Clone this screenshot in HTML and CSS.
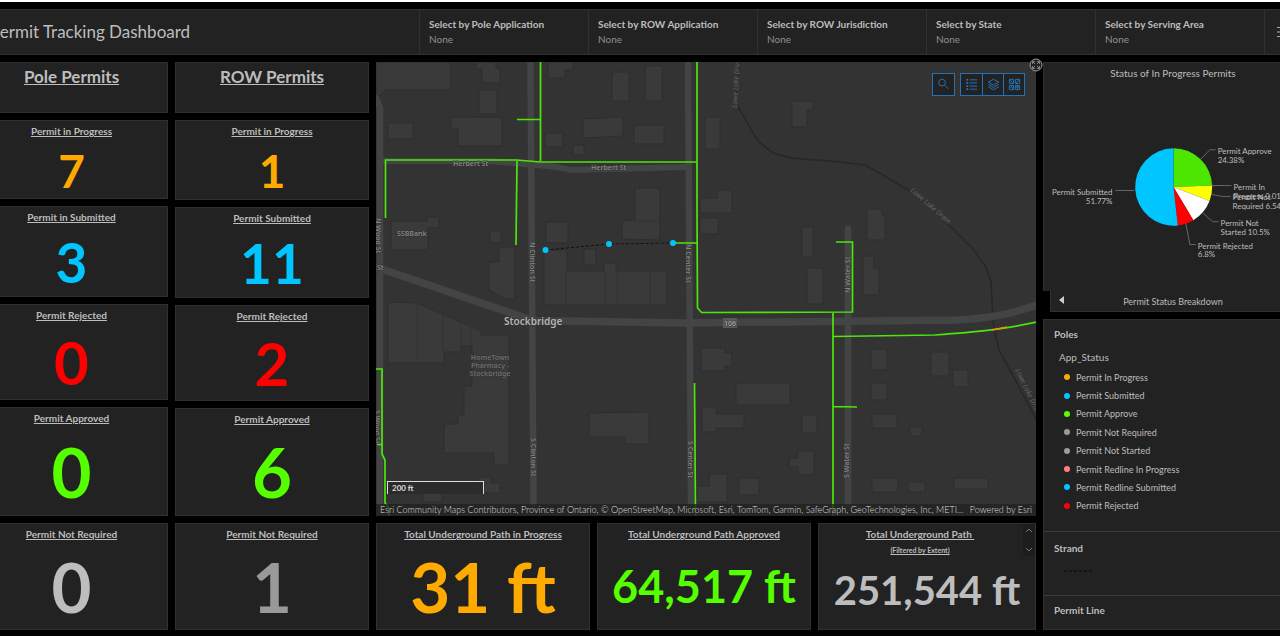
FILE: index.html
```html
<!DOCTYPE html>
<html lang="en">
<head>
<meta charset="utf-8">
<title>Permit Tracking Dashboard</title>
<link rel="stylesheet" href="styles.css">
</head>
<body>
<div class="dashboard">
  <header class="topbar">
    <h1 class="title">Permit Tracking Dashboard</h1>
    <div class="selector"><label for="s1">Select by Pole Application</label><select id="s1"><option>None</option></select></div>
    <div class="selector"><label for="s2">Select by ROW Application</label><select id="s2"><option>None</option></select></div>
    <div class="selector"><label for="s3">Select by ROW Jurisdiction</label><select id="s3"><option>None</option></select></div>
    <div class="selector"><label for="s4">Select by State</label><select id="s4"><option>None</option></select></div>
    <div class="selector"><label for="s5">Select by Serving Area</label><select id="s5"><option>None</option></select></div>
    <button class="menu" aria-label="Menu"><svg width="14" height="12" viewBox="0 0 14 12"><path d="M0 1.500h14M0 6h14M0 10.500h14" stroke="#aaa" fill="none"/></svg></button>
  </header>
  <main class="board">
    <section class="column pole">
      <div class="card"><h2>Pole Permits</h2></div>
      <div class="card"><h3>Permit in Progress</h3><p class="value v-xs orange">7</p></div>
      <div class="card"><h3>Permit in Submitted</h3><p class="value v-s blue">3</p></div>
      <div class="card"><h3>Permit Rejected</h3><p class="value v-m red">0</p></div>
      <div class="card"><h3>Permit Approved</h3><p class="value v-l green">0</p></div>
      <div class="card"><h3>Permit Not Required</h3><p class="value v-l light">0</p></div>
    </section>
    <section class="column row">
      <div class="card"><h2>ROW Permits</h2></div>
      <div class="card"><h3>Permit in Progress</h3><p class="value v-xs orange">1</p></div>
      <div class="card"><h3>Permit Submitted</h3><p class="value v-s blue">11</p></div>
      <div class="card"><h3>Permit Rejected</h3><p class="value v-m red">2</p></div>
      <div class="card"><h3>Permit Approved</h3><p class="value v-l green">6</p></div>
      <div class="card"><h3>Permit Not Required</h3><p class="value v-l gray">1</p></div>
    </section>
    <section class="center">
      <div class="map">
        <svg class="canvas" viewBox="376 62 660 454" preserveAspectRatio="xMidYMid slice">
          <g class="buildings">
            <path d="M376 62h75v28h-66l-9 10zM476 62h20v6h4v15h-18v-14h-6zM479 90h18v24h-18zM388 123h25v16h-25zM451 117h51v29h-44v-17h-7zM548 62h25v8h-8v8h-17zM612 72h17v29h-17zM645 66h17v35h-17zM583 119l40-2v19l-40 2zM634 125h30v19h-30zM545 133h18v14h-18zM573 145h11v10h-11zM705 117h15v32h-15zM792 101h21v9h-6v17h-15z"/>
            <path d="M391 221h36v-4h12v11h-11v22h-37zM490 231h11v12h-11zM499 247h16v52h-10l-16-9v-28h10zM546 222h22v21h-22zM635 188h25v52l-38-1v-19h13zM584 249h12v16h-12zM544 250h23v21h37v-8h12v8h51v34H544zM700 198h17v-8h15v23h-32zM700 218h18v16h-18zM802 227h11v30h-11zM867 209h15v6h3v25h-18zM863 256h11v12h5v27h-16zM807 268h16v36h-16z"/>
            <path d="M388 302l29 1 64 28v4h28v130h-15v-12h-50v-29h14v-9h6v-29h8v-40h-11v6h-17v11h-56zM589 413l60-1v32h-24v-7h-36zM701 348h24v5h7v13h-7v5h-24zM736 383h54v22h-54zM702 407h14v7h28v14h-28v4h-14zM802 415h15v18h-15zM798 451h16v24h-16v-8h-9v-9h9zM709 474h18v28h-30v-16h12zM739 478h20v17h-20zM871 349h16v21h-16zM871 383h16v17h-16zM931 352h18v24h-18zM953 370h15v17h-15zM872 414h25v14h-25zM910 427h12v9h-12zM872 478h26v14h-26zM908 482h17v10h-17zM954 478h34v11h-34zM423 493h19v9h-19zM480 477h11v6h9v10h-20z"/>
          </g>
          <path class="parcels" d="M417 303v60M443 314v38M461 322v24M471 326v20M566 272v33M605 272v33M617 272v33M650 272v33M622 221h37"/>
          <path class="drain" d="M740 62c-4 20-5 32-2 45l20 34 15 12 18 5 50 4 24 3 18 10 30 18 32 28 28 28 13 18 5 15 2 38 2 13 4 17 20 37 18 34"/>
          <g class="roads">
            <path d="M376 98l4 10v396M530.500 62l3 442M688 62l3 442M848 229V504" stroke-width="6.500"/>
            <path d="M380 161h110l46 4q25 2 35 5l115-3" stroke-width="6"/>
            <path d="M376 267l158 54h30l120 2 272-3c40-2 57-7 84-16" stroke-width="7.500"/>
          </g>
          <g class="lines">
            <path d="M385.500 218v-58h131l24 2H697M540.500 62v99M517 119.500h23M517 161l-1 84M697 62v147l.5 99 4 4.500 151-.5v-70H836M674 243h23M833 312v204M833 336.500l102-1.500c40-3 65-5 102-13M833 406.500l24 .5M694.500 383l1 133M376 369h6v85l3 6v43l4 5v8M377 444.500h6"/>
            <path class="pending" d="M992 330l15-3"/>
          </g>
          <path class="strand" d="M546 250l63-6 64-1"/>
          <g fill="#00c5ff"><circle cx="545.500" cy="250" r="3"/><circle cx="609" cy="244" r="3"/><circle cx="673" cy="243" r="3"/></g>
          <rect x="723" y="318" width="14" height="10" fill="#595b5a"/>
          <g class="labels">
            <text x="453" y="166">Herbert St</text><text x="591" y="170">Herbert St</text>
            <text x="397" y="236">SSBBank</text><text class="city" x="504" y="325">Stockbridge</text>
            <text x="724" y="326" fill="#aaa">106</text>
            <g class="poi"><text x="490" y="360">HomeTown</text><text x="490" y="368">Pharmacy -</text><text x="490" y="376">Stockbridge</text></g>
            <text transform="translate(530 242) rotate(90)">N Clinton St</text>
            <text transform="translate(531 438) rotate(90)">S Clinton St</text>
            <text transform="translate(686 244) rotate(90)">N Center St</text>
            <text transform="translate(688 441) rotate(90)">S Center St</text>
            <text transform="translate(376 218) rotate(90)">N Wood St</text>
            <text transform="translate(375 410) rotate(90)">S Wood St</text>
            <text transform="translate(850 293) rotate(-90)">N Water St</text>
            <text transform="translate(849 478) rotate(-90)">S Water St</text>
            <text x="377" y="270">St</text>
            <g class="water">
              <text transform="translate(737 108) rotate(-87)">Lowe Lake Drain</text>
              <text transform="translate(910 191) rotate(41)">Lowe Lake Drain</text>
              <text transform="translate(1015 370) rotate(64)">Lowe Lake Drain</text>
            </g>
          </g>
        </svg>
        <div class="tools">
          <button class="tool" aria-label="Search"><svg viewBox="0 0 16 16"><circle cx="6.500" cy="6" r="3.600"/><path d="M9.300 8.800l4 4"/></svg></button>
          <div class="toolgroup">
            <button class="tool" aria-label="Legend"><svg viewBox="0 0 16 16"><path d="M6 3h8M6 6.300h8M6 9.700h8M6 13h8"/><path d="M2.500 3h2M2.500 6.300h2M2.500 9.700h2M2.500 13h2" stroke-width="1.800"/></svg></button>
            <button class="tool" aria-label="Layers"><svg viewBox="0 0 16 16"><path d="M8 2.500l5.500 3L8 8.500l-5.500-3zM2.500 8L8 11l5.500-3M2.500 10.500l5.500 3 5.500-3"/></svg></button>
            <button class="tool" aria-label="Basemaps"><svg viewBox="0 0 16 16"><path d="M2.500 2.500h4.500v4.500h-4.500zM9 2.500h4.500v4.500h-4.500zM2.500 9h4.500v4.500h-4.500zM9 9h4.500v4.500h-4.500zM3 3l3.500 3.500M9.500 6.500l3.500-3.500M3.500 12l1.500-2 1.500 3M11.200 9.500v3.500M9.500 10.700h3.500"/></svg></button>
          </div>
        </div>
        <button class="expand" aria-label="Expand"><svg width="14" height="14" viewBox="0 0 14 14" fill="none" stroke="#999"><circle cx="7" cy="7" r="6" fill="#222"/><path d="M3.500 6V3.500H6M8 3.500h2.500V6M10.500 8v2.500H8M6 10.500H3.500V8M4 4l2 2M10 4L8 6M10 10L8 8M4 10l2-2" stroke-width=".8"/></svg></button>
        <div class="scale">200 ft</div>
        <div class="attribution"><span>Esri Community Maps Contributors, Province of Ontario, © OpenStreetMap, Microsoft, Esri, TomTom, Garmin, SafeGraph, GeoTechnologies, Inc, METI...</span><span>Powered by Esri</span></div>
      </div>
      <div class="totals">
        <div class="card"><h3>Total Underground Path in Progress</h3><p class="value v-l orange">31 ft</p></div>
        <div class="card"><h3>Total Underground Path Approved</h3><p class="value v-ft green">64,517 ft</p></div>
        <div class="card filtered"><h3>Total Underground Path&nbsp;</h3><h4>(Filtered by Extent)</h4><p class="value v-ft light">251,544 ft</p>
          <div class="scroller"><svg width="8" height="6" viewBox="0 0 8 6"><path d="M1 5l3-3 3 3"/></svg><svg width="8" height="6" viewBox="0 0 8 6"><path d="M1 1l3 3 3-3"/></svg></div>
        </div>
      </div>
    </section>
    <aside class="side">
      <div class="chart">
        <h2>Status of In Progress Permits</h2>
        <svg viewBox="1043 85 260 205">
          <path fill="#4ce600" d="M1173.500 187v-39a39 39 0 0 1 39 37.500z"/>
          <path fill="#ff0" d="M1173.500 187l39-1.500a39 39 0 0 1-2.700 15.700z"/>
          <path fill="#fff" d="M1173.500 187l36.300 14.200a39 39 0 0 1-16.300 19.300z"/>
          <path fill="#f00" d="M1173.500 187l20 33.500a39 39 0 0 1-15.700 5.300z"/>
          <path fill="#00c5ff" d="M1173.500 187l4.300 38.800a39 39 0 1 1-4.300-77.800z"/>
          <path class="leaders" d="M1201 159l9-9.500h6M1212 185.500h20M1212 194.500l10 2h9M1203 213l10 9h6M1186 224l4 21h6M1134 190.500h-19"/>
          <g class="slices">
            <text x="1218" y="154">Permit Approve</text><text x="1218" y="163">24.38%</text>
            <text x="1234" y="190">Permit In</text><text x="1234" y="199">Progress 0.01%</text>
            <text x="1233" y="200">Permit Not</text><text x="1233" y="209">Required 6.54%</text>
            <text x="1221" y="226">Permit Not</text><text x="1221" y="235">Started 10.5%</text>
            <text x="1198" y="249">Permit Rejected</text><text x="1198" y="258">6.8%</text>
            <text x="1112" y="195" text-anchor="end">Permit Submitted</text><text x="1112" y="204" text-anchor="end">51.77%</text>
          </g>
        </svg>
      </div>
      <div class="pager"><button aria-label="Previous"><svg width="5" height="8" viewBox="0 0 5 8"><path d="M5 0v8L0 4z" fill="#ccc"/></svg></button><span>Permit Status Breakdown</span></div>
      <div class="legend">
        <section class="poles"><h3>Poles</h3><h4>App_Status</h4>
          <ul>
            <li><i class="dot d-orange"></i>Permit In Progress</li>
            <li><i class="dot d-blue"></i>Permit Submitted</li>
            <li><i class="dot d-green"></i>Permit Approve</li>
            <li><i class="dot d-gray"></i>Permit Not Required</li>
            <li><i class="dot d-gray"></i>Permit Not Started</li>
            <li><i class="dot d-pink"></i>Permit Redline In Progress</li>
            <li><i class="dot d-blue"></i>Permit Redline Submitted</li>
            <li><i class="dot d-red"></i>Permit Rejected</li>
          </ul>
        </section>
        <section class="strands"><h3>Strand</h3><svg width="28" height="2" viewBox="0 0 28 2"><path d="M0 1h28" stroke="#111" stroke-width="1.500" stroke-dasharray="3 2"/></svg></section>
        <section class="permit-line"><h3>Permit Line</h3></section>
      </div>
    </aside>
  </main>
</div>
</body>
</html>
```
FILE: styles.css
```css
* { box-sizing: border-box; }
body { margin: 0; background: #000; color: #bdbdbd; font-family: Lato, "Liberation Sans", sans-serif; font-size: 11px; overflow: hidden; }
h1, h2, h3, h4, p, ul { margin: 0; padding: 0; }
button { background: none; border: 0; padding: 0; color: inherit; }
.dashboard { display: flex; flex-direction: column; min-height: 100vh; margin: 0 -23px 0 -25px; padding: 7px 0 6px; border-top: 2px solid #fff; border-bottom: 4px solid #fff; gap: 7px; }

.topbar { display: flex; height: 46px; background: #222; border: 1px solid #303030; }
.title { flex: 1; align-self: center; padding-left: 14px; font-size: 17px; line-height: 22px; font-weight: 400; white-space: nowrap; }
.selector { width: 169px; padding: 7px 9px; border-left: 1px solid #303030; display: flex; flex-direction: column; }
.selector label { font-size: 10px; line-height: 15px; font-weight: 700; white-space: nowrap; }
.selector select { appearance: none; background: none; border: 0; padding: 0; color: #8f8f8f; font: 10px/14px Lato, sans-serif; }
.menu { width: 38px; border-left: 1px solid #303030; display: flex; align-items: center; padding-left: 12px; }

.board { flex: 1; display: grid; grid-template-columns: 193fr 194fr 660fr 260fr; gap: 7px; }
.column { display: grid; gap: 7px; }
.pole { grid-template-rows: 51fr 79fr 91fr 96fr 109fr 107fr; }
.row { grid-template-rows: 51fr 80fr 91fr 96fr 108fr 107fr; }
.card { position: relative; display: flex; flex-direction: column; align-items: center; min-width: 0; min-height: 0; background: #222; border: 1px solid #303030; padding-top: 3px; }
.card h2 { font-size: 17px; line-height: 22px; font-weight: 700; text-decoration: underline; }
.card h3 { font-size: 10px; line-height: 14px; font-weight: 700; text-decoration: underline; white-space: nowrap; }
.card h4 { font-size: 7px; line-height: 14px; padding-top: 2px; text-decoration: underline; }
.value { flex: 1; display: flex; align-items: center; min-height: 0; line-height: 1; font-weight: 700; white-space: nowrap; padding-top: 2px; }
.v-xs { font-size: 46px; padding-top: 5px; }
.v-s { font-size: 55px; padding-top: 4px; }
.v-m { font-size: 60px; }
.v-l { font-size: 69px; }
.v-ft { font-size: 45px; }
.filtered .v-ft { font-size: 40px; padding-bottom: 8px; }
.orange { color: #ffaa00; }
.blue { color: #00c5ff; }
.red { color: #ff0000; }
.green { color: #55ff00; }
.light { color: #bdbdbd; }
.gray { color: #999; }

.center { display: grid; grid-template-rows: 454fr 107fr; gap: 7px; min-width: 0; }
.map { position: relative; background: #323332; min-height: 0; }
.canvas { position: absolute; width: 100%; height: 100%; }
.buildings { fill: #393a39; stroke: #2d2e2d; stroke-width: 1; }
.parcels { fill: none; stroke: #323332; }
.drain { fill: none; stroke: #25272a; stroke-width: 1.5; }
.roads { fill: none; stroke: #434544; stroke-linecap: round; }
.lines { fill: none; stroke: #4ce60a; stroke-width: 1.7; }
.lines .pending { stroke: #e69800; }
.strand { fill: none; stroke: #111; stroke-dasharray: 3 2; }
.labels { font-family: "Noto Sans", sans-serif; font-size: 7px; font-weight: 600; fill: #858585; }
.labels text { paint-order: stroke; stroke: #323332; stroke-width: 1px; }
.labels .city { font-size: 10px; fill: #b5b5b5; }
.poi { fill: #6e6e6e; text-anchor: middle; }
.water { fill: #626262; font-style: italic; font-weight: 400; }
.tools { position: absolute; top: 11px; right: 11px; display: flex; gap: 5px; }
.toolgroup { display: flex; border: 1px solid #2372b8; background: #222; }
.tool { width: 23px; height: 23px; display: grid; place-items: center; background: #222; border: 1px solid #2372b8; }
.toolgroup .tool { width: 21px; height: 21px; border-width: 0 0 0 1px; }
.toolgroup .tool:first-child { border-left: 0; }
.tool svg { width: 15px; height: 15px; fill: none; stroke: #2676ba; stroke-width: 1; }
.expand { position: absolute; top: -4px; right: -7px; width: 14px; height: 14px; }
.expand svg { display: block; }
.scale { position: absolute; left: 11px; bottom: 22px; width: 97px; height: 13px; padding-left: 4px; border: 1px solid #ddd; border-bottom: 0; background: #2b2b2b; color: #ddd; font-size: 8px; line-height: 13px; font-weight: 700; }
.attribution { position: absolute; left: 0; right: 0; bottom: 0; display: flex; justify-content: space-between; padding: 0 4px; background: rgba(34, 34, 34, .8); color: #ddd; font-size: 9px; line-height: 12px; font-weight: 300; white-space: nowrap; }

.totals { display: grid; grid-template-columns: 214fr 214fr 218fr; gap: 7px; min-height: 0; }
.filtered { padding-right: 14px; }
.filtered .value { margin-right: -14px; }
.scroller { position: absolute; top: 0; right: 0; width: 12px; height: 32px; display: flex; flex-direction: column; justify-content: space-between; align-items: center; padding: 3px 0; background: #1d1d1d; }
.scroller svg { fill: none; stroke: #777; }

.side { display: flex; flex-direction: column; min-width: 0; }
.chart { height: 229px; background: #222; border: 1px solid #303030; border-bottom: 0; display: flex; flex-direction: column; }
.chart h2 { padding-top: 3px; text-align: center; font-size: 10px; line-height: 14px; font-weight: 400; }
.chart svg { flex: 1; min-height: 0; margin-top: 4px; }
.leaders { fill: none; stroke: #666; }
.slices { fill: #bdbdbd; font-size: 8px; }
.pager { position: relative; height: 21px; margin-left: 7px; padding-right: 7px; background: #222; border: 1px solid #303030; border-top: 0; text-align: center; font-size: 9px; line-height: 21px; }
.pager button { position: absolute; left: 8px; top: 5px; height: 8px; }
.pager svg { display: block; }
.legend { flex: 1; margin-top: 7px; background: #222; border: 1px solid #303030; display: flex; flex-direction: column; }
.legend section { padding: 6px 10px; }
.legend section + section { border-top: 1px solid #3c3c3c; }
.legend h3 { font-size: 10px; line-height: 16px; }
.legend h4 { padding: 7px 5px 3px; font-size: 10px; line-height: 16px; font-weight: 400; }
.legend ul { display: grid; min-height: 147px; list-style: none; padding-left: 10px; }
.legend li { display: flex; align-items: center; gap: 6px; font-size: 9px; }
.legend .poles { flex: 1; }
.legend .strands { height: 64px; padding-top: 8px; }
.strands svg { display: block; margin: 14px 0 0 10px; }
.permit-line { height: 34px; }
.dot { width: 6px; height: 6px; border-radius: 50%; }
.d-orange { background: #ffaa00; }
.d-blue { background: #00c5ff; }
.d-green { background: #55ff00; }
.d-gray { background: #9c9c9c; }
.d-pink { background: #ff7f7f; }
.d-red { background: #ff0000; }
```
